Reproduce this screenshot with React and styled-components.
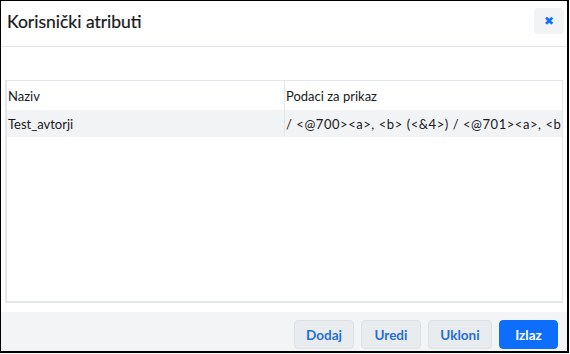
import React from 'react';
import styled, { createGlobalStyle } from 'styled-components';

const GlobalStyle = createGlobalStyle`
  html, body {
    margin: 0;
    padding: 0;
    background: #fff;
  }
  * {
    box-sizing: border-box;
  }
`;

const Frame = styled.div`
  width: 569px;
  height: 353px;
  border-style: solid;
  border-color: #000;
  border-width: 1px 2px 2px 1px;
  display: flex;
  flex-direction: column;
  background: #fff;
  font-family: Lato, "Open Sans", sans-serif;
  color: #16191d;
  overflow: hidden;
`;

const Header = styled.div`
  height: 46px;
  flex: none;
  display: flex;
  align-items: center;
  justify-content: space-between;
  padding: 0 3px 0 6px;
  border-bottom: 1px solid #e3e6ea;
`;

const Title = styled.h5`
  margin: 0 0 4px;
  font-size: 17.5px;
  font-weight: 400;
  -webkit-text-stroke: 0.2px #16191d;
`;

const CloseButton = styled.button`
  width: 30px;
  height: 26px;
  margin-bottom: 6px;
  border: none;
  border-radius: 4px;
  background: #f1f3f5;
  color: #0d6efd;
  font-family: "DejaVu Sans", sans-serif;
  font-size: 12px;
  font-weight: 700;
  display: flex;
  align-items: center;
  justify-content: center;
  padding: 0;
`;

const Body = styled.div`
  flex: 1;
  padding: 33px 4px 9px 4px;
  display: flex;
`;

const TableBox = styled.div`
  flex: 1;
  border: 1px solid #e3e6ea;
  border-left-width: 2px;
  border-bottom-width: 2px;
  overflow: hidden;
`;

const Table = styled.table`
  width: 100%;
  table-layout: fixed;
  border-collapse: collapse;
  font-size: 13px;
`;

const HeadCell = styled.th`
  height: 29px;
  padding: 0 4px 0 1px;
  text-align: left;
  font-weight: 400;
  white-space: nowrap;
  overflow: hidden;
  border-right: ${p => (p.$last ? 'none' : '1px solid #e3e6ea')};
`;

const Row = styled.tr`
  background: ${p => (p.$striped ? '#f2f3f5' : '#fff')};
`;

const Cell = styled.td`
  height: 27px;
  padding: 0 0 0 1px;
  white-space: nowrap;
  overflow: hidden;
  letter-spacing: ${p => (p.$code ? '0.55px' : '0')};
  border-right: ${p => (p.$last ? 'none' : '1px solid #e3e6ea')};
`;

const Footer = styled.div`
  height: 39px;
  flex: none;
  background: #f3f4f6;
  display: flex;
  justify-content: flex-end;
  align-items: flex-start;
  gap: 7px;
  padding: 8px 9px 0 0;
`;

const Button = styled.button`
  height: 29px;
  min-width: ${p => p.$w}px;
  padding: 0 10px;
  border-radius: 4px;
  border: 1px solid ${p => (p.$primary ? '#0d6efd' : '#dde1e6')};
  background: ${p => (p.$primary ? '#0d6efd' : '#e9ecef')};
  color: ${p => (p.$primary ? '#fff' : '#1f6fd6')};
  font-family: Lato, "Open Sans", sans-serif;
  font-size: 13.5px;
  font-weight: 700;
`;

const rows = [
  {
    name: 'Test_avtorji',
    data: '/ <@700><a>, <b> (<&4>) / <@701><a>, <b> (<&4>)',
  },
];

export default function App() {
  return (
    <>
      <GlobalStyle />
      <Frame>
        <Header>
          <Title>Korisnički atributi</Title>
          <CloseButton aria-label="Zatvori">✖</CloseButton>
        </Header>
        <Body>
          <TableBox>
            <Table>
              <thead>
                <tr>
                  <HeadCell>Naziv</HeadCell>
                  <HeadCell $last>Podaci za prikaz</HeadCell>
                </tr>
              </thead>
              <tbody>
                {rows.map((r, i) => (
                  <Row key={i} $striped={i % 2 === 0}>
                    <Cell>{r.name}</Cell>
                    <Cell $last $code>{r.data}</Cell>
                  </Row>
                ))}
              </tbody>
            </Table>
          </TableBox>
        </Body>
        <Footer>
          <Button $w={60}>Dodaj</Button>
          <Button $w={60}>Uredi</Button>
          <Button $w={64}>Ukloni</Button>
          <Button $w={59} $primary>Izlaz</Button>
        </Footer>
      </Frame>
    </>
  );
}
